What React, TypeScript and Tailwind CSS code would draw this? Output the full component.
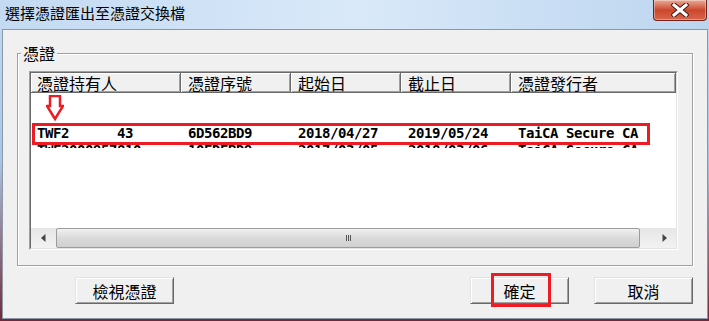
import React from 'react'

const cjk = { fontFamily: '"Noto Sans CJK TC", "Noto Sans", sans-serif' }
const mono = { fontFamily: '"DejaVu Sans Mono", "Liberation Mono", monospace' }

const columns = [
  { title: '憑證持有人', w: 'w-[150px] pl-[6px]' },
  { title: '憑證序號', w: 'w-[110px] pl-[7px]' },
  { title: '起始日', w: 'w-[110px] pl-[7px]' },
  { title: '截止日', w: 'w-[110px] pl-[7px]' },
  { title: '憑證發行者', w: 'flex-1 pl-[7px]' },
]

const rows = [
  ['TWF2      43', '6D562BD9', '2018/04/27', '2019/05/24', 'TaiCA Secure CA'],
  ['TWF2000957810', '10EDEBD9', '2017/03/05', '2018/03/06', 'TaiCA Secure CA'],
]

function Row({ cells }: { cells: string[] }) {
  return (
    <div
      className="flex h-[17px] shrink-0 text-[14px] leading-[17px] font-bold tracking-[-0.43px] text-black whitespace-pre"
      style={mono}
    >
      {cells.map((c, i) => (
        <div key={i} className={columns[i].w}>
          {c}
        </div>
      ))}
    </div>
  )
}

function DialogButton({ label, children }: { label: string; children?: React.ReactNode }) {
  return (
    <div className="relative">
      <button
        className="flex h-[27px] w-[99px] items-center justify-center border border-t-[#e3e3e3] border-l-[#e3e3e3] border-r-[#696969] border-b-[#696969] bg-[#f0f0f0] text-[16px] leading-none text-black shadow-[inset_1px_1px_0_#fff,inset_-1px_-1px_0_#a0a0a0]"
        style={cjk}
      >
        {label}
      </button>
      {children}
    </div>
  )
}

export default function App() {
  return (
    <div className="flex h-[321px] w-[709px] flex-col overflow-hidden bg-gradient-to-b from-[#c4dbf3] via-[#a9c5e4] to-[#6e2a3a]">
      {/* title bar */}
      <div className="flex h-[29px] shrink-0 items-start justify-between bg-gradient-to-r from-[#c3daf2] via-[#d9e9f9] to-[#bcd5ef]">
        <div className="pl-[5px] pt-[4px] text-[15px] leading-[18px] text-black" style={cjk}>
          選擇憑證匯出至憑證交換檔
        </div>
        <div className="mr-[2px] flex h-[21px] w-[54px] items-center justify-center rounded-b-[4px] border border-t-0 border-[#6e2219] bg-gradient-to-b from-[#e9a996] via-[#c9472c] to-[#d9654a] shadow-[inset_0_0_0_1px_rgba(255,255,255,0.35)]">
          <svg width="18" height="14" viewBox="0 0 18 14">
            <path d="M3,2 L15,12 M15,2 L3,12" stroke="#4a1a14" strokeWidth="5" strokeLinecap="square" />
            <path d="M3,2 L15,12 M15,2 L3,12" stroke="#ffffff" strokeWidth="3" strokeLinecap="square" />
          </svg>
        </div>
      </div>

      {/* window body */}
      <div className="flex flex-1 pl-[2px] pr-[1px] pb-[2px]">
        <div className="flex flex-1 flex-col border border-[#8a98a8] bg-[#f0f0f0]" style={cjk}>
          {/* group box */}
          <div className="relative ml-[14px] mt-[23px] h-[213px] w-[676px] border border-[#a0a0a0] pl-[11px] pt-[17px] shadow-[inset_1px_1px_0_#fff,1px_1px_0_#fff]">
            <div className="absolute -top-[10px] left-[3px] bg-[#f0f0f0] px-[2px] text-[16px] leading-[18px] text-black">
              憑證
            </div>

            {/* list view */}
            <div className="flex h-[179px] w-[649px] flex-col border border-t-[#a0a0a0] border-l-[#a0a0a0] border-r-[#fff] border-b-[#fff] bg-white">
              <div className="flex flex-1 flex-col border border-t-[#696969] border-l-[#696969] border-r-[#e3e3e3] border-b-[#e3e3e3]">
                {/* header */}
                <div className="flex h-[20px] shrink-0">
                  {columns.map((c, i) => (
                    <div
                      key={i}
                      className={`${c.w} flex h-full items-center whitespace-nowrap border-r border-b border-[#696969] bg-[#f0f0f0] text-[16px] leading-[18px] text-black shadow-[inset_1px_1px_0_#fff,inset_-1px_-1px_0_#a0a0a0]`}
                    >
                      {c.title}
                    </div>
                  ))}
                </div>

                {/* rows */}
                <div className="relative flex flex-1 flex-col overflow-hidden bg-white">
                  <div className="h-[15px] shrink-0" />
                  <div className="h-[17px] shrink-0" />
                  <Row cells={rows[0]} />
                  <div className="h-[6px] shrink-0 overflow-hidden">
                    <Row cells={rows[1]} />
                  </div>

                  <svg className="absolute left-[15px] top-[2px]" width="18" height="26" viewBox="0 0 18 26">
                    <polygon points="4,1 14,1 14,11 17,11 9,24 1,11 4,11" fill="#fff" stroke="#ed1c24" strokeWidth="2.5" />
                  </svg>
                  <div className="absolute left-[1px] top-[30px] h-[22px] w-[618px] border-[3px] border-[#ed1c24]" />
                </div>

                {/* horizontal scrollbar */}
                <div className="flex h-[20px] shrink-0 items-stretch bg-gradient-to-b from-[#e6e6e6] to-[#f2f2f2]">
                  <div className="flex w-[24px] items-center justify-center">
                    <svg width="5" height="8" viewBox="0 0 5 8">
                      <polygon points="4.5,0 0,4 4.5,8" fill="#444" />
                    </svg>
                  </div>
                  <div className="ml-[1px] flex w-[584px] items-center justify-center rounded-[2px] border border-[#9c9c9c] bg-gradient-to-b from-[#f0f0f0] via-[#dadada] to-[#d0d0d0]">
                    <div className="flex gap-[1px]">
                      <div className="h-[6px] w-[1px] bg-[#555]" />
                      <div className="h-[6px] w-[1px] bg-[#555]" />
                      <div className="h-[6px] w-[1px] bg-[#555]" />
                    </div>
                  </div>
                  <div className="flex-1" />
                  <div className="flex w-[24px] items-center justify-center">
                    <svg width="5" height="8" viewBox="0 0 5 8">
                      <polygon points="0.5,0 5,4 0.5,8" fill="#444" />
                    </svg>
                  </div>
                </div>
              </div>
            </div>
          </div>

          {/* buttons */}
          <div className="mt-[11px] flex w-[690px] pl-[72px]">
            <DialogButton label="檢視憑證" />
            <div className="flex-1" />
            <div className="flex gap-[25px]">
              <DialogButton label="確定">
                <div className="absolute left-[21px] -top-[4px] h-[34px] w-[60px] border-[3px] border-[#ed1c24]" />
              </DialogButton>
              <DialogButton label="取消" />
            </div>
          </div>
        </div>
      </div>
    </div>
  )
}
